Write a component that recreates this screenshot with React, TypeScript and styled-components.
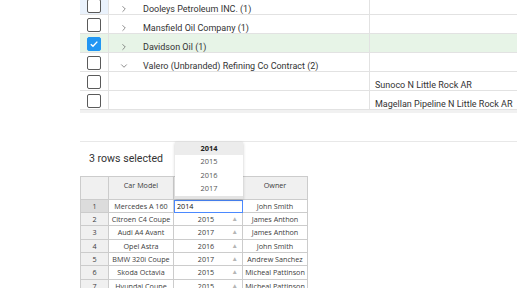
import { Fragment } from "react";
import styled, { createGlobalStyle } from "styled-components";
import { ChevronRight, ChevronDown } from "lucide-react";

const GlobalStyle = createGlobalStyle`
  html, body {
    margin: 0;
    padding: 0;
    background: #ffffff;
  }
  * {
    box-sizing: border-box;
  }
`;

const Page = styled.div`
  width: 517px;
  height: 288px;
  overflow: hidden;
  padding-left: 80px;
  font-family: Roboto, "Liberation Sans", sans-serif;
`;

const TreeGrid = styled.div`
  height: 113px;
  overflow: hidden;
  border-bottom: 3px solid #f1f1f1;
`;

const TreeBody = styled.div`
  margin-top: -4px;
`;

const TreeRow = styled.div<{ selected?: boolean }>`
  display: grid;
  grid-template-columns: 29px 260px 1fr;
  height: 19px;
  border-bottom: 1px solid #e2e2e2;
  background: ${(p) => (p.selected ? "#e7f4e7" : "#ffffff")};
`;

const CheckCell = styled.div<{ hovered?: boolean }>`
  display: flex;
  align-items: center;
  justify-content: center;
  padding-top: 1px;
  border-right: 1px solid #e2e2e2;
  background: ${(p) => (p.hovered ? "#eaf2fc" : "transparent")};
`;

const Box = styled.div<{ checked?: boolean }>`
  width: 14px;
  height: 14px;
  border-radius: 2px;
  border: 1.5px solid ${(p) => (p.checked ? "#2196f3" : "#5a5a5a")};
  background: ${(p) => (p.checked ? "#2196f3" : "#ffffff")};
  display: flex;
  align-items: center;
  justify-content: center;
`;

const NameCell = styled.div`
  display: flex;
  align-items: flex-end;
  padding-left: 10px;
  padding-bottom: 0;
  font-size: 9px;
  line-height: 10px;
  color: #333333;
  white-space: nowrap;
`;

const Toggle = styled.div`
  flex: 0 0 24px;
  width: 24px;
  min-width: 24px;
  height: 10px;
  display: flex;
  align-items: center;
  color: #555555;
`;

const LocationCell = styled.div`
  display: flex;
  align-items: flex-end;
  padding-left: 5px;
  padding-bottom: 0;
  border-left: 1px solid #e2e2e2;
  font-size: 9px;
  line-height: 10px;
  color: #333333;
  white-space: nowrap;
`;

const Gap = styled.div`
  height: 28px;
`;

const SheetSection = styled.div`
  position: relative;
  border-top: 1px solid #e8e8e8;
`;

const SelectedBar = styled.div`
  height: 34px;
  display: flex;
  align-items: center;
  padding-left: 9px;
  padding-bottom: 1px;
  font-size: 10.6px;
  color: #333333;
`;

const Sheet = styled.div`
  display: grid;
  grid-template-columns: 29px 65px 69px 65px;
  width: 228px;
  font-family: "Open Sans", "Liberation Sans", sans-serif;
  font-size: 7.2px;
  color: #3c3c3c;
`;

const HeadCell = styled.div`
  height: 23.5px;
  background: #f0f0f0;
  border-top: 1px solid #cccccc;
  border-right: 1px solid #cccccc;
  border-bottom: 1px solid #cccccc;
  text-align: center;
  line-height: 14px;
  padding-top: 1px;
  &:first-child {
    border-left: 1px solid #cccccc;
  }
`;

const RowHead = styled.div<{ active?: boolean }>`
  height: 13.4px;
  background: ${(p) => (p.active ? "#dcdcdc" : "#f0f0f0")};
  border-left: 1px solid #cccccc;
  border-right: 1px solid #cccccc;
  border-bottom: 1px solid #cccccc;
  text-align: center;
  line-height: 12.4px;
`;

const Cell = styled.div`
  height: 13.4px;
  border-right: 1px solid #cccccc;
  border-bottom: 1px solid #cccccc;
  text-align: center;
  line-height: 12.4px;
  white-space: nowrap;
  overflow: hidden;
`;

const YearCell = styled(Cell)`
  position: relative;
  padding-right: 4px;
`;

const Arrow = styled.span`
  position: absolute;
  right: 4px;
  top: 0;
  font-size: 6.5px;
  color: #b5b5b5;
`;

const EditorCell = styled.div`
  height: 13.4px;
  border: 1.5px solid #4b89ff;
  padding-left: 2px;
  line-height: 10.5px;
  color: #111111;
  background: #ffffff;
`;

const Dropdown = styled.div`
  position: absolute;
  left: 95px;
  top: 0;
  width: 68px;
  background: #ffffff;
  box-shadow: 0 1px 3px rgba(0, 0, 0, 0.22);
  border-bottom: 3px solid #e4e4e4;
  font-family: "Open Sans", "Liberation Sans", sans-serif;
  font-size: 7.4px;
  color: #444444;
`;

const Option = styled.div<{ current?: boolean }>`
  height: 13.4px;
  line-height: 13.4px;
  text-align: center;
  font-weight: ${(p) => (p.current ? 700 : 400)};
  color: ${(p) => (p.current ? "#222222" : "#555555")};
  background: ${(p) => (p.current ? "#ececec" : "#ffffff")};
`;

type TreeItem = {
  name?: string;
  location?: string;
  toggle?: "open" | "closed";
  checked?: boolean;
  hovered?: boolean;
};

const treeItems: TreeItem[] = [
  { name: "Dooleys Petroleum INC. (1)", toggle: "closed", hovered: true },
  { name: "Mansfield Oil Company (1)", toggle: "closed" },
  { name: "Davidson Oil (1)", toggle: "closed", checked: true },
  { name: "Valero (Unbranded) Refining Co Contract (2)", toggle: "open" },
  { location: "Sunoco N Little Rock AR" },
  { location: "Magellan Pipeline N Little Rock AR" },
];

const cars = [
  ["Mercedes A 160", "2014", "John Smith"],
  ["Citroen C4 Coupe", "2015", "James Anthon"],
  ["Audi A4 Avant", "2017", "James Anthon"],
  ["Opel Astra", "2016", "John Smith"],
  ["BMW 320i Coupe", "2017", "Andrew Sanchez"],
  ["Skoda Octavia", "2015", "Micheal Pattinson"],
  ["Hyundai Coupe", "2015", "Micheal Pattinson"],
];

const App = () => {
  return (
    <>
      <GlobalStyle />
      <Page>
        <TreeGrid>
          <TreeBody>
            {treeItems.map((item, i) => (
              <TreeRow key={i} selected={item.checked}>
                <CheckCell hovered={item.hovered}>
                  <Box checked={item.checked}>
                    {item.checked && (
                      <svg width="10" height="10" viewBox="0 0 10 10">
                        <path
                          d="M1.8 5.2 L4 7.3 L8.3 2.6"
                          fill="none"
                          stroke="#ffffff"
                          strokeWidth="1.4"
                        />
                      </svg>
                    )}
                  </Box>
                </CheckCell>
                <NameCell>
                  {item.toggle && (
                    <Toggle>
                      {item.toggle === "open" ? (
                        <ChevronDown size={10} strokeWidth={1.6} />
                      ) : (
                        <ChevronRight size={10} strokeWidth={1.6} />
                      )}
                    </Toggle>
                  )}
                  <span>{item.name}</span>
                </NameCell>
                <LocationCell>{item.location}</LocationCell>
              </TreeRow>
            ))}
          </TreeBody>
        </TreeGrid>
        <Gap />
        <SheetSection>
          <SelectedBar>3 rows selected</SelectedBar>
          <Sheet>
            <HeadCell />
            <HeadCell>Car Model</HeadCell>
            <HeadCell />
            <HeadCell>Owner</HeadCell>
            {cars.map(([model, year, owner], i) => (
              <Fragment key={i}>
                <RowHead active={i === 0}>{i + 1}</RowHead>
                <Cell>{model}</Cell>
                {i === 0 ? (
                  <EditorCell>{year}</EditorCell>
                ) : (
                  <YearCell>
                    {year}
                    <Arrow>▲</Arrow>
                  </YearCell>
                )}
                <Cell>{owner}</Cell>
              </Fragment>
            ))}
          </Sheet>
          <Dropdown>
            <Option current>2014</Option>
            <Option>2015</Option>
            <Option>2016</Option>
            <Option>2017</Option>
          </Dropdown>
        </SheetSection>
      </Page>
    </>
  );
};

export default App;
